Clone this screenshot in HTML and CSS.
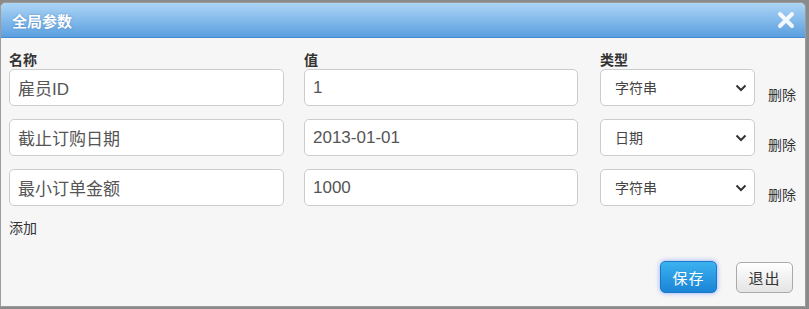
FILE: index.html
```html
<!DOCTYPE html>
<html lang="zh-CN">
<head>
    <meta charset="UTF-8">
    <title>全局参数</title>
    <link rel="stylesheet" href="styles.css">
</head>
<body>
    <div class="dialog">
        <div class="dialog-title">
            <span>全局参数</span>
            <a href="#" class="close" title="关闭">
                <svg width="18" height="18" viewBox="0 0 18 18">
                    <path d="M3 3 L15 15 M15 3 L3 15" stroke="#fff" stroke-width="4" stroke-linecap="round"/>
                </svg>
            </a>
        </div>
        <div class="dialog-body">
            <div class="param-row head">
                <div class="col-name">名称</div>
                <div class="col-value">值</div>
                <div class="col-type">类型</div>
            </div>
            <div class="param-row">
                <input class="col-name field" type="text" value="雇员ID">
                <input class="col-value field" type="text" value="1">
                <select class="col-type field select"><option>字符串</option></select>
                <a href="#" class="remove">删除</a>
            </div>
            <div class="param-row">
                <input class="col-name field" type="text" value="截止订购日期">
                <input class="col-value field" type="text" value="2013-01-01">
                <select class="col-type field select"><option>日期</option></select>
                <a href="#" class="remove">删除</a>
            </div>
            <div class="param-row">
                <input class="col-name field" type="text" value="最小订单金额">
                <input class="col-value field" type="text" value="1000">
                <select class="col-type field select"><option>字符串</option></select>
                <a href="#" class="remove">删除</a>
            </div>
            <a href="#" class="add">添加</a>
            <div class="dialog-buttons">
                <button class="btn btn-primary">保存</button>
                <button class="btn">退出</button>
            </div>
        </div>
    </div>
</body>
</html>
```
FILE: styles.css
```css
body {
    margin: 0;
    background-color: #8a8a8a;
    font-family: "Liberation Sans", "Noto Sans CJK SC", sans-serif;
}

.dialog {
    margin-top: 2px;
    width: 804px;
    height: 303px;
    border: 1px solid #9c9c9c;
    border-radius: 6px 6px 0 0;
    background-color: #f6f6f6;
    overflow: hidden;
}

.dialog-title {
    height: 34px;
    display: flex;
    align-items: center;
    justify-content: space-between;
    padding: 0 10px 0 11px;
    background: linear-gradient(to bottom, #acd5f5, #5b9fe0);
    border-bottom: 1px solid #4689d2;
    color: white;
    font-size: 15px;
    font-weight: bold;
    text-shadow: 0 0 2px rgba(40, 90, 160, 0.5);
}

.close {
    display: flex;
    opacity: 0.9;
}

.dialog-body {
    padding: 14px 8px 0 8px;
    color: #333;
    font-size: 15px;
}

.param-row {
    display: flex;
    margin-bottom: 13px;
}

.param-row.head {
    margin-bottom: 0;
    height: 17px;
    line-height: 17px;
    font-weight: bold;
    font-size: 14px;
}

.col-name {
    width: 275px;
    margin-right: 20px;
}

.col-value {
    width: 274px;
    margin-right: 22px;
}

.col-type {
    width: 155px;
}

.field {
    box-sizing: border-box;
    height: 37px;
    border: 1px solid #cccccc;
    border-radius: 5px;
    background-color: white;
    padding: 0 8px;
    font-family: "Liberation Sans", "Noto Sans CJK SC", sans-serif;
    font-size: 17px;
    color: #555;
}

.select {
    appearance: none;
    -webkit-appearance: none;
    padding: 0 14px;
    font-size: 14px;
    color: #444;
    background-image: url("data:image/svg+xml,%3Csvg xmlns='http://www.w3.org/2000/svg' width='12' height='8' viewBox='0 0 12 8'%3E%3Cpath d='M1.5 1.5 L6 6 L10.5 1.5' fill='none' stroke='%23333' stroke-width='2'/%3E%3C/svg%3E");
    background-repeat: no-repeat;
    background-position: right 7px center;
}

.remove {
    align-self: flex-end;
    margin-left: 13px;
    margin-bottom: 2px;
    color: #333;
    text-decoration: none;
    font-size: 14px;
}

.add {
    display: block;
    margin-top: 14px;
    color: #333;
    text-decoration: none;
    font-size: 14px;
    line-height: 17px;
}

.dialog-buttons {
    display: flex;
    justify-content: flex-end;
    align-items: center;
    gap: 19px;
    margin-top: 24px;
    padding-right: 4px;
}

.btn {
    width: 57px;
    height: 31px;
    border: 1px solid #aaaaaa;
    border-radius: 5px;
    background: linear-gradient(to bottom, #ffffff, #e4e4e4);
    color: #333;
    font-family: "Noto Sans CJK SC", sans-serif;
    font-size: 15px;
    letter-spacing: 1px;
    padding: 0;
}

.btn-primary {
    height: 32px;
    border-color: #1b78c9;
    background: linear-gradient(to bottom, #3bb2ef, #1b84d6);
    color: white;
    box-shadow: 0 0 5px #8fa8ff;
}
```
